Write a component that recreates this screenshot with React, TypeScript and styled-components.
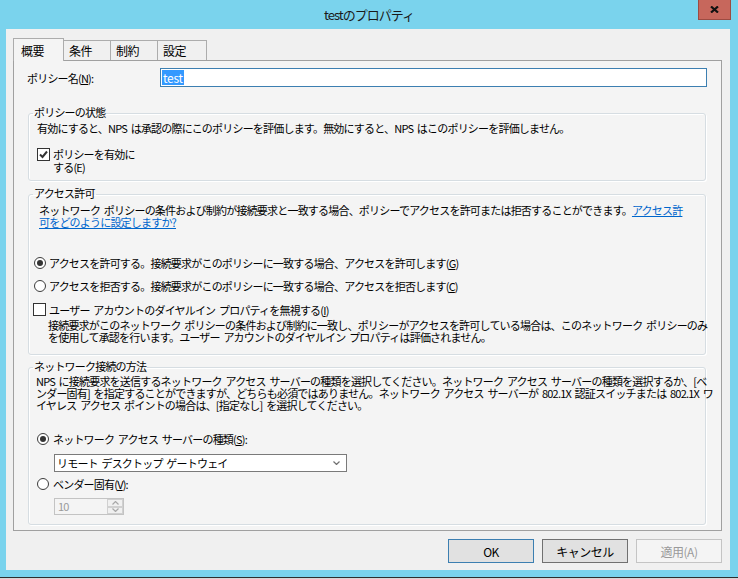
import styled, { createGlobalStyle } from "styled-components"

const GlobalStyle = createGlobalStyle`
  html, body {
    margin:0;
    padding:0;
  }

  body {
    background:#7ad3ed;
    font-family:"Noto Sans CJK JP", "Noto Sans", sans-serif;
    font-size:11px;
    letter-spacing:-0.8px;
    word-spacing:2px;
    color:#000;
  }
`

function Chevron({ up }: { up?: boolean }) {
  return (
    <svg width="7" height="4" viewBox="0 0 7 4">
      <path
        d={up ? "M0.5 3.5 L3.5 0.5 L6.5 3.5" : "M0.5 0.5 L3.5 3.5 L6.5 0.5"}
        fill="none"
        stroke="currentColor"
        strokeWidth="1.2"
      />
    </svg>
  )
}

export default function App() {

  return (
    <>
      <GlobalStyle />

      <Window>

        <TitleBar>
          <Title>testのプロパティ</Title>
          <CloseButton>
            <svg width="9" height="7" viewBox="0 0 9 7">
              <path d="M1 0.5 L8 6.5 M8 0.5 L1 6.5" stroke="#111" strokeWidth="2.2" />
            </svg>
          </CloseButton>
        </TitleBar>

        <Client>

          <TabStrip>
            <Tab $active $width={51}>概要</Tab>
            <Tab $width={47}>条件</Tab>
            <Tab $width={47}>制約</Tab>
            <Tab $width={49}>設定</Tab>
          </TabStrip>

          <Panel>

            <NameRow>
              <NameLabel>ポリシー名(<u>N</u>):</NameLabel>
              <NameField>
                <Selection>test</Selection>
              </NameField>
            </NameRow>

            <Group $gap={19} $pad={6}>
              <Legend>ポリシーの状態</Legend>

              <Text $indent={8} $gap={1}>
                有効にすると、NPS は承認の際にこのポリシーを評価します。無効にすると、NPS はこのポリシーを評価しません。
              </Text>

              <OptionRow $indent={8} $gap={14} $align="flex-start">
                <CheckMark>
                  <svg width="11" height="11" viewBox="0 0 11 11">
                    <path d="M2 5.5 L4.5 8 L9 2.5" fill="none" stroke="#333" strokeWidth="2" />
                  </svg>
                </CheckMark>
                <OptionLabel $lineHeight={13}>
                  ポリシーを有効に<br />する(E)
                </OptionLabel>
              </OptionRow>
            </Group>

            <Group $gap={6} $pad={11}>
              <Legend>アクセス許可</Legend>

              <Text $indent={10} $gap={2}>
                ネットワーク ポリシーの条件および制約が接続要求と一致する場合、ポリシーでアクセスを許可または拒否することができます。<Link>アクセス許<br />可をどのように設定しますか?</Link>
              </Text>

              <OptionRow $indent={5} $gap={29}>
                <RadioMark $on />
                <OptionLabel>
                  アクセスを許可する。接続要求がこのポリシーに一致する場合、アクセスを許可します(<u>G</u>)
                </OptionLabel>
              </OptionRow>

              <OptionRow $indent={5} $gap={11}>
                <RadioMark />
                <OptionLabel>
                  アクセスを拒否する。接続要求がこのポリシーに一致する場合、アクセスを拒否します(<u>C</u>)
                </OptionLabel>
              </OptionRow>

              <OptionRow $indent={4} $gap={11}>
                <CheckMark />
                <OptionLabel>
                  ユーザー アカウントのダイヤルイン プロパティを無視する(<u>I</u>)
                </OptionLabel>
              </OptionRow>

              <Text $indent={19} $gap={3}>
                接続要求がこのネットワーク ポリシーの条件および制約に一致し、ポリシーがアクセスを許可している場合は、このネットワーク ポリシーのみ<br />
                を使用して承認を行います。ユーザー アカウントのダイヤルイン プロパティは評価されません。
              </Text>
            </Group>

            <Group $gap={5} $pad={9}>
              <Legend>ネットワーク接続の方法</Legend>

              <Text $indent={7} $gap={0}>
                NPS に接続要求を送信するネットワーク アクセス サーバーの種類を選択してください。ネットワーク アクセス サーバーの種類を選択するか、[ベ<br />
                ンダー固有] を指定することができますが、どちらも必須ではありません。ネットワーク アクセス サーバーが 802.1X 認証スイッチまたは 802.1X ワ<br />
                イヤレス アクセス ポイントの場合は、[指定なし] を選択してください。
              </Text>

              <OptionRow $indent={8} $gap={22} $spacing={4}>
                <RadioMark $on />
                <OptionLabel>ネットワーク アクセス サーバーの種類(<u>S</u>):</OptionLabel>
              </OptionRow>

              <Dropdown>
                <span>リモート デスクトップ ゲートウェイ</span>
                <DropArrow>
                  <Chevron />
                </DropArrow>
              </Dropdown>

              <OptionRow $indent={8} $gap={6} $spacing={4}>
                <RadioMark />
                <OptionLabel>ベンダー固有(<u>V</u>):</OptionLabel>
              </OptionRow>

              <Spinner>
                <SpinValue>10</SpinValue>
                <SpinButtons>
                  <SpinButton><Chevron up /></SpinButton>
                  <SpinButton><Chevron /></SpinButton>
                </SpinButtons>
              </Spinner>
            </Group>

          </Panel>

          <ButtonBar>
            <DialogButton $kind="default">OK</DialogButton>
            <DialogButton>キャンセル</DialogButton>
            <DialogButton $kind="disabled">適用(A)</DialogButton>
          </ButtonBar>

        </Client>

        <BottomEdge />

      </Window>
    </>
  )
}

const Window = styled.div`
  width:738px;
  height:579px;
  overflow:hidden;

  display:flex;
  flex-direction:column;

  background:#7ad3ed;
`

const TitleBar = styled.div`
  height:29px;
  flex:none;

  display:grid;
  grid-template-columns:1fr auto 1fr;
  align-items:start;
`

const Title = styled.div`
  grid-column:2;
  line-height:29px;
  font-size:13px;
  letter-spacing:-1px;
  color:#1a1a1a;
`

const CloseButton = styled.div`
  grid-column:3;
  justify-self:end;
  margin-right:7px;

  width:33px;
  height:20px;
  box-sizing:border-box;

  background:#c7675c;
  border:1px solid #9c4b42;
  border-top:none;

  display:flex;
  align-items:center;
  justify-content:center;
`

const Client = styled.div`
  height:541px;
  flex:none;
  box-sizing:border-box;
  margin:0 8px 0 6px;
  padding:9px 8px 9px 7px;

  background:#f0f0f0;

  display:flex;
  flex-direction:column;
`

const TabStrip = styled.div`
  height:22px;
  display:flex;
  align-items:flex-end;
`

const Tab = styled.div<{ $active?: boolean; $width: number }>`
  position:relative;
  z-index:${p => (p.$active ? 1 : 0)};

  width:${p => p.$width}px;
  height:${p => (p.$active ? 23 : 20)}px;
  margin-bottom:${p => (p.$active ? -1 : 0)}px;
  box-sizing:border-box;

  padding-left:${p => (p.$active ? 7 : 5)}px;

  border:1px solid #acacac;
  border-bottom:none;
  ${p => (p.$active ? "" : "border-left:none;")}

  background:${p => (p.$active ? "#f4f4f4" : "#f0f0f0")};

  display:flex;
  align-items:center;

  font-size:12px;
  letter-spacing:-0.4px;
`

const Panel = styled.div`
  box-sizing:border-box;
  border:1px solid #a0a0a0;
  background:#f4f4f4;
  padding:7px 15px 5px 14px;

  display:flex;
  flex-direction:column;
`

const NameRow = styled.div`
  height:19px;
  display:flex;
  align-items:center;
`

const NameLabel = styled.div`
  width:133px;
  margin-left:-1px;
  flex:none;
`

const NameField = styled.div`
  flex:1;
  height:19px;
  margin-right:-1px;
  box-sizing:border-box;

  border:1px solid #3c7fb1;
  background:#fff;
  padding-left:1px;

  display:flex;
  align-items:center;
`

const Selection = styled.span`
  background:#3399ff;
  color:#fff;
  line-height:15px;
  padding:0 1px;
  font-size:12px;
  letter-spacing:-0.3px;
`

const Group = styled.fieldset<{ $gap: number; $pad: number }>`
  margin:${p => p.$gap}px 0 0 0;
  padding:0 0 ${p => p.$pad}px 0;
  min-width:0;

  border:1px solid #d6dde2;
  border-radius:3px;
  box-shadow:inset 1px 1px 0 #fff, 1px 1px 0 #fff;

  display:flex;
  flex-direction:column;
`

const Legend = styled.legend`
  margin-left:4px;
  padding:0 1px 3px;
  line-height:12px;
`

const Text = styled.div<{ $indent: number; $gap: number; $lineHeight?: number }>`
  margin:${p => p.$gap}px 0 0 ${p => p.$indent}px;
  line-height:${p => p.$lineHeight ?? 12}px;
  white-space:nowrap;
`

const Link = styled.span`
  color:#0066cc;
  text-decoration:underline;
`

const OptionRow = styled.div<{ $indent: number; $gap: number; $spacing?: number; $align?: string }>`
  margin:${p => p.$gap}px 0 0 ${p => p.$indent}px;
  display:flex;
  align-items:${p => p.$align ?? "center"};
  gap:${p => p.$spacing ?? 3}px;
`

const OptionLabel = styled.span<{ $lineHeight?: number }>`
  line-height:${p => p.$lineHeight ?? 12}px;
  white-space:nowrap;
`

const CheckMark = styled.span`
  width:13px;
  height:13px;
  flex:none;
  box-sizing:border-box;

  border:1px solid #333;
  background:#fff;

  display:flex;
  align-items:center;
  justify-content:center;
`

const RadioMark = styled.span<{ $on?: boolean }>`
  width:12px;
  height:12px;
  flex:none;
  box-sizing:border-box;

  border:1px solid #3c3c3c;
  border-radius:50%;
  background:#fff;

  display:flex;
  align-items:center;
  justify-content:center;

  &::after{
    content:"";
    width:6px;
    height:6px;
    border-radius:50%;
    background:${p => (p.$on ? "#333" : "transparent")};
  }
`

const Dropdown = styled.div`
  margin:9px 0 0 25px;
  width:293px;
  height:18px;
  box-sizing:border-box;

  border:1px solid #7a7a7a;
  background:#fff;
  padding:0 6px 0 2px;

  display:flex;
  align-items:center;
  justify-content:space-between;

  white-space:nowrap;
`

const DropArrow = styled.span`
  color:#707070;
  display:flex;
`

const Spinner = styled.div`
  margin:8px 0 0 25px;
  width:70px;
  height:17px;
  box-sizing:border-box;

  border:1px solid #c3c3c3;
  background:#f4f4f4;

  display:flex;
`

const SpinValue = styled.span`
  flex:1;
  padding-left:3px;
  line-height:15px;
  color:#9a9a9a;
`

const SpinButtons = styled.div`
  width:16px;
  display:flex;
  flex-direction:column;
`

const SpinButton = styled.div`
  flex:1;
  box-sizing:border-box;
  border:1px solid #d0d0d0;
  background:#f0f0f0;
  color:#a8a8a8;

  display:flex;
  align-items:center;
  justify-content:center;
`

const ButtonBar = styled.div`
  margin-top:8px;
  display:flex;
  justify-content:flex-end;
  gap:8px;
`

const DialogButton = styled.div<{ $kind?: "default" | "disabled" }>`
  width:86px;
  height:24px;
  box-sizing:border-box;

  border:1px solid ${p =>
    p.$kind === "default" ? "#3c7fb1" : p.$kind === "disabled" ? "#c4c4c4" : "#707070"};
  background:${p => (p.$kind === "disabled" ? "#f4f4f4" : "#e1e1e1")};
  color:${p => (p.$kind === "disabled" ? "#9a9a9a" : "#000")};

  display:flex;
  align-items:center;
  justify-content:center;

  font-size:12px;
  letter-spacing:-0.5px;
`

const BottomEdge = styled.div`
  margin-top:7px;
  height:2px;
  flex:none;
  background:#2e2e2e;
  border-bottom:1px solid #d6d6d6;
  box-sizing:border-box;
`
